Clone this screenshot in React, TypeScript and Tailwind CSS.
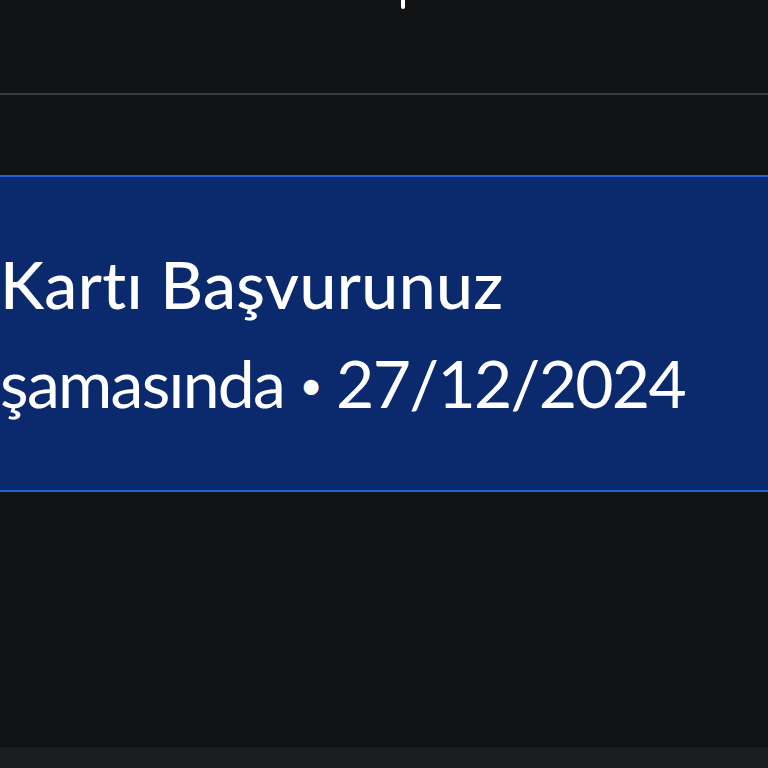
export default function App() {
  return (
    <div className="h-[768px] w-[768px] overflow-hidden bg-[#121315] flex flex-col font-['Lato','Liberation_Sans',sans-serif] text-white">
      {/* header remainder */}
      <div className="h-[93px] shrink-0">
        <div className="ml-[401px] h-[9px] w-[4px] rounded-b-[2px] bg-white" />
      </div>
      <div className="h-[2px] shrink-0 bg-[#3a3a3d]" />

      <div className="h-[80px] shrink-0" />

      {/* status card */}
      <div className="h-[317px] shrink-0 border-y-2 border-[#1f5fe0] bg-[#0a2a6d] flex flex-col overflow-hidden">
        <div className="pt-[68px] flex flex-col gap-[21px] whitespace-nowrap">
          <p className="text-[66px] leading-[78px] font-medium tracking-[0.4px]">Kartı Başvurunuz</p>
          <p className="text-[66px] leading-[78px] font-normal tracking-[-1.7px]">
            şamasında <span className="text-[40px] align-[8px]">•</span> 27/12/2024
          </p>
        </div>
      </div>

      <div className="flex-1" />

      <div className="h-[22px] shrink-0 border-t border-[#0d0e10] bg-[#1c1d21]" />
    </div>
  );
}
